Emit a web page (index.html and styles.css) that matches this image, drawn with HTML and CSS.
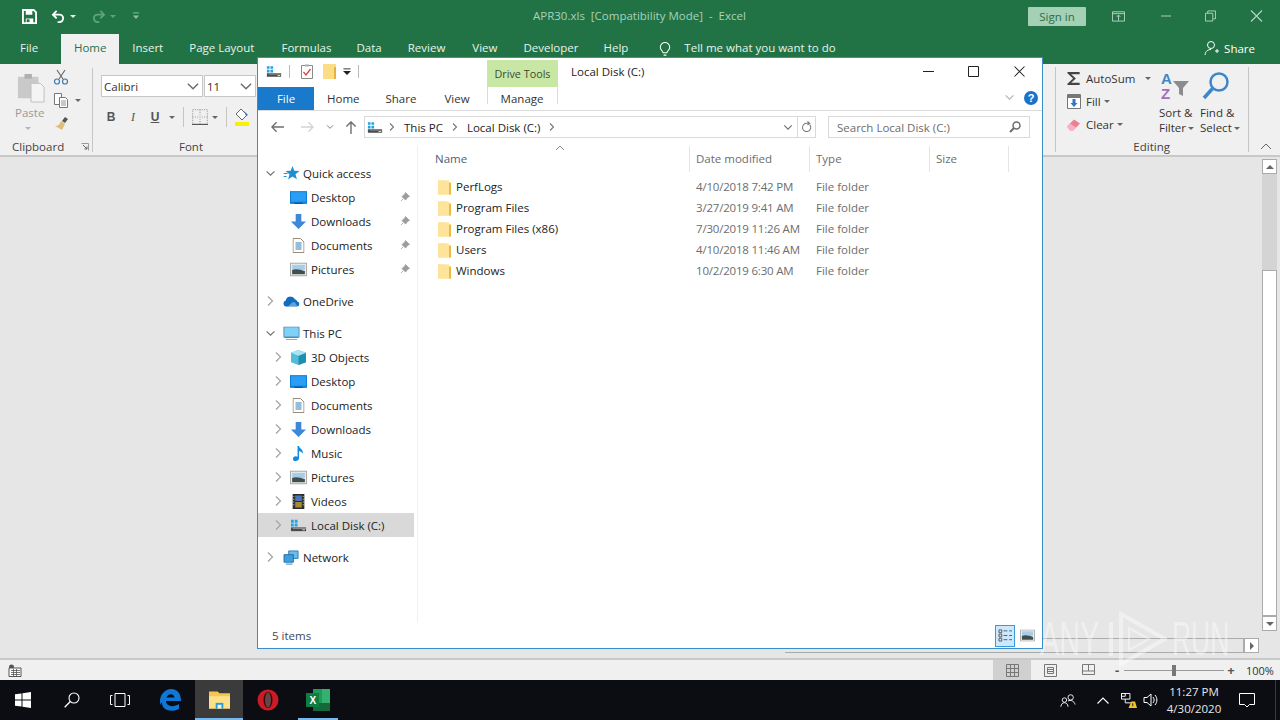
FILE: index.html
```html
<!DOCTYPE html>
<html lang="en">
<head>
<meta charset="utf-8">
<title>APR30.xls - Excel</title>
<link rel="stylesheet" href="styles.css">
</head>
<body>
<svg class="defs" width="0" height="0" aria-hidden="true">
  <defs>
    <symbol id="chev-r" viewBox="0 0 8 12"><path d="M2 1.500 6.500 6 2 10.500" fill="none" stroke="#a6a6a6" stroke-width="1.300"/></symbol>
    <symbol id="chev-d" viewBox="0 0 12 8"><path d="M1.500 1.500 6 6l4.500-4.500" fill="none" stroke="#6e6e6e" stroke-width="1.300"/></symbol>
    <symbol id="folder" viewBox="0 0 15 16"><path d="M1 1.500h8l1.500 1.500H14v12.500H1z" fill="#fbdc84"/><path d="M1 1.500h11v14H1z" fill="#fde49a"/><path d="M12 4h2v11.500h-2z" fill="#e9b949"/></symbol>
    <symbol id="drive" viewBox="0 0 18 14"><path d="M1 1h3v3H1zM5 1h3v3H5zM1 5h3v3H1zM5 5h3v3H5z" fill="#25a3e0"/><path d="M1 9h16v4H1z" fill="#4a4a4a"/><path d="M3 9.500h14v1H3z" fill="#9a9a9a"/><path d="M13 11h3v1h-3z" fill="#dcdcdc"/></symbol>
    <symbol id="desktop" viewBox="0 0 16 14"><path d="M0 1h16v12H0z" fill="#0b7ed6"/><path d="M1 2h14v9H1z" fill="#2a9df4"/><path d="M4 12h8v1H4z" fill="#0a4f88"/></symbol>
    <symbol id="down" viewBox="0 0 16 16"><path d="M5 0h6v8h5l-8 8-8-8h5z" fill="#3d87d6"/></symbol>
    <symbol id="doc" viewBox="0 0 12 15"><path d="M.5.500h7.500l3.500 3.500v10.500H.5z" fill="#fff" stroke="#9a8a7a"/><path d="M3 5h6M3 7h6M3 9h6M3 11h6" stroke="#2a7ab9"/></symbol>
    <symbol id="pics" viewBox="0 0 16 13"><path d="M.5.500h15v12H.5z" fill="#f2f2f2" stroke="#a9a9a9"/><path d="M2 2h12v5H2z" fill="#a8cdea"/><path d="M2 7c4-1.500 8 0 12 1v3H2z" fill="#3f4f4c"/></symbol>
    <symbol id="pin" viewBox="0 0 10 10"><path d="M5.500.500 9.500 4.500 8 5 6 7.500 5.500 8 2 4.500 2.500 4 5 2zM3.500 6.500 1 9" fill="#9c9c9c" stroke="#9c9c9c" stroke-width=".8"/></symbol>
    <symbol id="star" viewBox="0 0 16 15"><path d="M9 0l1.800 4.800 5.200.2-4 3.200 1.400 5L9 10.400 4.600 13.500 6 8.300 2 5.100l5.200-.3z" fill="#1e8fd5"/><path d="M0 7h4v1H0zM0 10h3v1H0z" fill="#1e8fd5"/></symbol>
    <symbol id="cloud" viewBox="0 0 18 11"><path d="M3.500 11A3.300 3.300 0 0 1 3 4.500 5 5 0 0 1 12.500 3 3.200 3.200 0 0 1 15 5.500 2.800 2.800 0 0 1 15 11z" fill="#0f6cc0"/><path d="M5 11l4.500-4.500c1-.8 2.500-.8 3.500.2L15.500 11z" fill="#fff" opacity=".35"/></symbol>
    <symbol id="pc" viewBox="0 0 18 15"><path d="M1 .500h16v11H1z" fill="#7fd1f8" stroke="#4f8fb6"/><path d="M2 11h14v1H2z" fill="#3f7ea6"/><path d="M3 13.500h12v1H3z" fill="#8a8a8a"/></symbol>
    <symbol id="cube" viewBox="0 0 16 16"><path d="M8 0l8 3v10l-8 3-8-3V3z" fill="#52bdd9"/><path d="M8 6l8-3v10l-8 3z" fill="#1f8fae"/><path d="M8 0l8 3-8 3-8-3z" fill="#a8e4f1"/></symbol>
    <symbol id="music" viewBox="0 0 12 16"><path d="M5 0h1.500c.5 3 5 3.500 4 8-1-2-3-2.500-4-2.500V13c0 1.800-1.500 3-3.500 3S0 15 0 13.500 1.500 11 3 11c.8 0 1.500.2 2 .5z" fill="#0f8ce0"/></symbol>
    <symbol id="film" viewBox="0 0 13 16"><path d="M0 0h13v16H0z" fill="#2d2d2d"/><path d="M3 1.500h7v6H3z" fill="#4b76b8"/><path d="M3 8.500h7v6H3z" fill="#a68a36"/><path d="M1 2h1v1H1zM1 5h1v1H1zM1 8h1v1H1zM1 11h1v1H1zM11 2h1v1h-1zM11 5h1v1h-1zM11 8h1v1h-1zM11 11h1v1h-1z" fill="#ddd"/></symbol>
    <symbol id="net" viewBox="0 0 18 16"><path d="M6 1h10v8H6z" fill="#69bde8" stroke="#2f7fb4"/><path d="M1 5h10v8H1z" fill="#3f9fdc" stroke="#1e6ea6"/><path d="M3 14.500h7v1H3z" fill="#2f7fb4"/></symbol>
  </defs>
</svg>

<div class="screen">
  <header class="titlebar">
    <div class="qat">
      <svg class="ic16" viewBox="0 0 16 16"><path d="M1 1h11.500L15 3.500V15H1z" fill="none" stroke="#fff" stroke-width="2"/><path d="M4 1.500h7V6H4zM4 10h8v5H4z" fill="#fff"/><path d="M5 11h3v3H5z" fill="#217346"/></svg>
      <svg class="ic-undo" viewBox="0 0 16 14"><path d="M6 1 2 5l4 4M2 5h7a4 4 0 0 1 0 8H7" fill="none" stroke="#fff" stroke-width="2"/></svg>
      <span class="caret caret-w"></span>
      <svg class="ic-undo dim" viewBox="0 0 16 14"><path d="M10 1l4 4-4 4M14 5H7a4 4 0 0 0 0 8h2" fill="none" stroke="#5fa27f" stroke-width="2"/></svg>
      <span class="caret caret-dim"></span>
      <svg class="ic-more" viewBox="0 0 9 9"><path d="M1 1h7" stroke="#8cc0a4"/><path d="M1 4h7L4.500 8z" fill="#8cc0a4"/></svg>
    </div>
    <div class="doc-title">APR30.xls&nbsp; [Compatibility Mode]&nbsp; -&nbsp; Excel</div>
    <div class="win-ctrls">
      <span class="signin">Sign in</span>
      <svg class="ctl ctl-opts" viewBox="0 0 14 12"><path d="M.5 1.500h13v10H.5zM.5 3.500h13M7 5v6M5 7l2-2 2 2" fill="none" stroke="#b7d5c4"/></svg>
      <svg class="ctl ctl-min" viewBox="0 0 12 12"><path d="M0 6h11" stroke="#b7d5c4"/></svg>
      <svg class="ctl ctl-rest" viewBox="0 0 12 12"><path d="M.5 3h8v8.500h-8zM3 3V.500h8.500V9H9" fill="none" stroke="#b7d5c4"/></svg>
      <svg class="ctl ctl-x" viewBox="0 0 12 12"><path d="M.5.500l11 11M11.500.500l-11 11" stroke="#b7d5c4" stroke-width="1.100"/></svg>
    </div>
  </header>

  <nav class="tabs">
    <span class="tab tab-file">File</span>
    <span class="tab tab-home">Home</span>
    <span class="tab tab-insert">Insert</span>
    <span class="tab tab-layout">Page Layout</span>
    <span class="tab tab-formulas">Formulas</span>
    <span class="tab tab-data">Data</span>
    <span class="tab tab-review">Review</span>
    <span class="tab tab-view">View</span>
    <span class="tab tab-dev">Developer</span>
    <span class="tab tab-help">Help</span>
    <svg class="bulb" viewBox="0 0 12 16"><path d="M4 11.500C3.500 9.500 1 8.500 1 5.500a5 5 0 0 1 10 0c0 3-2.500 4-3 6zM4.500 14h3" fill="none" stroke="#fff" stroke-width="1.100"/></svg>
    <span class="tab tab-tell">Tell me what you want to do</span>
    <span class="share">
      <svg class="share-ic" viewBox="0 0 16 16"><circle cx="7" cy="5" r="3.500" fill="none" stroke="#fff"/><path d="M1 15c.5-4 3-5.500 6-5.500M11 11h4M13 9v4" fill="none" stroke="#fff"/></svg>
      Share
    </span>
  </nav>

  <section class="ribbon">
    <div class="rib-left">
      <div class="group-clip">
        <div class="paste">
          <svg class="paste-ic" viewBox="0 0 30 32"><path d="M1 4h22v23H1z" fill="#c9c9c9"/><path d="M8 1h8v5H8z" fill="#b0b0b0"/><path d="M15 11h10l4 4v16H15z" fill="#f4f4f4" stroke="#bdbdbd"/></svg>
          <span class="paste-label">Paste</span>
          <span class="caret caret-grey paste-caret"></span>
        </div>
        <div class="clip-tools">
          <svg class="tool" viewBox="0 0 16 16"><path d="M4 1l6 9M12 1L6 10" stroke="#6a6a6a" stroke-width="1.200"/><circle cx="4" cy="12.500" r="2.500" fill="none" stroke="#3d7ab0" stroke-width="1.200"/><circle cx="12" cy="12.500" r="2.500" fill="none" stroke="#3d7ab0" stroke-width="1.200"/></svg>
          <span class="tool-row">
            <svg class="tool" viewBox="0 0 16 16"><path d="M1.500 1.500h7v11h-7z" fill="#fff" stroke="#777"/><path d="M6.500 5.500h6l2 2v8h-8z" fill="#fff" stroke="#777"/><path d="M8 9h5M8 11h5M8 13h5" stroke="#777" stroke-width=".8"/></svg>
            <span class="caret caret-grey"></span>
          </span>
          <svg class="tool" viewBox="0 0 16 16"><path d="M9 6l3-4 3 2-3 4z" fill="#555"/><path d="M8 6l4 3-3 6-7-4c3 0 5-2 6-5z" fill="#e0bd7c"/></svg>
        </div>
      </div>
      <div class="group-font">
        <div class="font-row">
          <span class="combo combo-name">Calibri<svg class="combo-arrow" viewBox="0 0 12 8"><use href="#chev-d"/></svg></span>
          <span class="combo combo-size">11<svg class="combo-arrow" viewBox="0 0 12 8"><use href="#chev-d"/></svg></span>
        </div>
        <div class="font-row2">
          <b class="fmt">B</b><i class="fmt fmt-i">I</i><u class="fmt fmt-u">U</u>
          <span class="caret caret-grey"></span>
          <span class="sep"></span>
          <svg class="tool" viewBox="0 0 14 14"><path d="M.5.500h13v13H.5z" fill="none" stroke="#aaa" stroke-dasharray="1 1"/><path d="M7 .5v13M.5 7h13" stroke="#aaa" stroke-dasharray="1 1"/><path d="M0 13.500h14" stroke="#555"/></svg>
          <span class="caret caret-grey"></span>
          <span class="sep"></span>
          <svg class="fill-ic" viewBox="0 0 16 18"><path d="M7 1l6 6-5 5-6-6z" fill="#fff" stroke="#666"/><path d="M10 3l4 4-2 1z" fill="#2f6fc0"/><path d="M1 14h14v4H1z" fill="#f7f000"/></svg>
        </div>
      </div>
    </div>
    <div class="rib-labels">
      <span class="lbl-clip">Clipboard</span>
      <svg class="launcher" viewBox="0 0 8 8"><path d="M.5.500h7v7" fill="none" stroke="#999"/><path d="M2 2l4 4M3.500 6H6V3.500" fill="none" stroke="#666"/></svg>
      <span class="lbl-font">Font</span>
    </div>
    <div class="rib-right">
      <div class="edit-list">
        <div class="edit-row"><svg class="edit-ic" viewBox="0 0 16 16"><path d="M1 1h13v2.500H5l5 4.500-5 4.500h9V15H1v-1.500L7 8 1 2.500z" fill="#444"/></svg><span>AutoSum</span><span class="caret caret-grey caret-auto"></span></div>
        <div class="edit-row"><svg class="edit-ic" viewBox="0 0 14 15"><path d="M.5.500h13v14H.5z" fill="#fff" stroke="#777"/><path d="M1 1h12v3H1z" fill="#777"/><path d="M5.500 5h3v4h2L7 13 3.500 9h2z" fill="#2f78c4"/></svg><span>Fill</span><span class="caret caret-grey caret-row"></span></div>
        <div class="edit-row"><svg class="edit-ic" viewBox="0 0 16 14"><path d="M1 9l7-7 6 4-7 7H4z" fill="#ee7f92"/><path d="M1 9l3-3 6 4-3 3H4z" fill="#f7b3bf"/></svg><span>Clear</span><span class="caret caret-grey caret-row"></span></div>
      </div>
      <div class="edit-big edit-sort">
        <svg class="big-ic" viewBox="0 0 32 28"><text x="2" y="12" class="az az-a">A</text><text x="2" y="27" class="az az-z">Z</text><path d="M14 9h16l-6 7v8l-4-2v-6z" fill="#8c8c8c"/></svg>
        <span>Sort &amp;</span>
        <span class="big-line2">Filter<span class="caret caret-grey caret-tight"></span></span>
      </div>
      <div class="edit-big">
        <svg class="big-ic" viewBox="0 0 30 28"><circle cx="18" cy="10" r="8.500" fill="none" stroke="#3f86c8" stroke-width="2.500"/><path d="M12 16L3 26" stroke="#3f86c8" stroke-width="3.500"/></svg>
        <span>Find &amp;</span>
        <span class="big-line2">Select<span class="caret caret-grey caret-tight"></span></span>
      </div>
    </div>
    <div class="rib-foot">
      <span class="lbl-edit">Editing</span>
      <svg class="collapse" viewBox="0 0 12 7"><path d="M1 6l5-5 5 5" fill="none" stroke="#666"/></svg>
    </div>
  </section>

  <main class="sheet">
    <div class="vscroll">
      <span class="sb-btn"><span class="tri-up"></span></span>
      <span class="sb-track"></span>
      <span class="sb-thumb"></span>
      <span class="sb-btn"><span class="tri-down"></span></span>
    </div>
    <div class="hscroll">
      <span class="hs-line"></span>
      <span class="sb-btn"><span class="tri-right"></span></span>
    </div>
  </main>

  <footer class="statusbar">
    <svg class="macro" viewBox="0 0 14 13"><circle cx="3.500" cy="3" r="2.500" fill="#555"/><path d="M1 4h12v8.500H1z" fill="#fff" stroke="#555"/><path d="M3 6.500h9M3 8.500h9M3 10.500h9M5.500 5v7M8.500 5v7" stroke="#555" stroke-width=".8"/></svg>
    <div class="view-btns">
      <span class="vb vb-on"><svg class="vb-ic" viewBox="0 0 13 13"><path d="M.5.500h12v12H.5zM4.500.5v12M8.500.5v12M.5 4.500h12M.5 8.500h12" fill="none" stroke="#777"/></svg></span>
      <span class="vb"><svg class="vb-ic" viewBox="0 0 13 13"><path d="M.5.500h12v12H.5zM3.500 3.500h6v6h-6zM4 5.500h5M4 7.500h5" fill="none" stroke="#777"/></svg></span>
      <span class="vb"><svg class="vb-ic" viewBox="0 0 13 13"><path d="M.5.500h12v10H.5zM6.500.5v6.500M.5 7h12" fill="none" stroke="#777"/></svg></span>
    </div>
    <div class="zoom">
      <span class="z-pm">-</span>
      <span class="z-track"><span class="z-thumb"></span></span>
      <span class="z-pm">+</span>
      <span class="z-val">100%</span>
    </div>
  </footer>

  <div class="taskbar">
    <svg class="tb-start" viewBox="0 0 16 16"><path d="M0 2.300 6.500 1.400V7.500H0zM7.500 1.300 16 0V7.500H7.500zM0 8.500h6.500V14.600L0 13.700zM7.500 8.500H16V16L7.500 14.700z" fill="#fff"/></svg>
    <svg class="tb-search" viewBox="0 0 16 16"><circle cx="10" cy="6" r="5" fill="none" stroke="#fff" stroke-width="1.100"/><path d="M6.300 9.500.7 15.300" stroke="#fff" stroke-width="1.300"/></svg>
    <svg class="tb-tv" viewBox="0 0 20 14"><path d="M5 .5h10v13H5zM2.500 2.500H.5v9h2M17.500 2.500h2v9h-2" fill="none" stroke="#fff"/></svg>
    <svg class="tb-app tb-edge" viewBox="0 0 22 22"><path d="M1 11C2 4 7 0 12 0c6 0 10 4 10 12H7c0 5 7 7 13 3v5c-8 4-18 1-17-7-1 1-1.500 2-2 3zM7.500 8.500h8C15 4 9 4 7.500 8.500z" fill="#0f78d6"/></svg>
    <span class="tb-slot tb-active">
      <svg class="tb-folder" viewBox="0 0 22 20"><path d="M0 1h9l2 2h11v16H0z" fill="#f2c94c"/><path d="M0 6h22v13H0z" fill="#fde08a"/><path d="M7 13h8v6H7z" fill="#2a9de0"/><path d="M9 15h4v4H9z" fill="#fff3c4"/></svg>
    </span>
    <svg class="tb-app tb-opera" viewBox="0 0 22 22"><circle cx="11" cy="11" r="10.500" fill="#cc1b24"/><ellipse cx="11" cy="11" rx="4.500" ry="8" fill="#3a0b0d"/><ellipse cx="11" cy="11" rx="3" ry="7.500" fill="#eee" opacity=".25"/></svg>
    <span class="tb-slot tb-open">
      <svg class="tb-excel" viewBox="0 0 24 22"><path d="M7 0h17v22H7z" fill="#1f9b58"/><path d="M16 0h8v22h-8z" fill="#34b16f"/><path d="M7 14h17v8H7z" fill="#14693a"/><path d="M0 4h13v14H0z" fill="#107c41"/><text x="3.500" y="15" class="xl-x">X</text></svg>
    </span>
    <div class="tray">
      <svg class="tr-people" viewBox="0 0 18 16"><circle cx="12" cy="4.500" r="3" fill="none" stroke="#fff"/><circle cx="5" cy="7.500" r="2.500" fill="none" stroke="#fff"/><path d="M1 15c0-3 2-4.500 4-4.500s4 1.500 4 4.500M9 8.500c3-1.500 7 0 8 4" fill="none" stroke="#fff"/></svg>
      <svg class="tr-chev" viewBox="0 0 12 7"><path d="M.5 6.500 6 1l5.500 5.500" fill="none" stroke="#fff" stroke-width="1.100"/></svg>
      <svg class="tr-net" viewBox="0 0 17 16"><path d="M.5.500h9v6h-9zM4.500 6.500v4h8" fill="none" stroke="#fff"/><path d="M.5.500h4v3h-4z" fill="none" stroke="#fff"/><path d="M11 9h4l2 7H8z" fill="#f7c325"/><path d="M12 11h1v3h-1z" fill="#222"/></svg>
      <svg class="tr-vol" viewBox="0 0 16 16"><path d="M1 5.500h3L8 2v12L4 10.500H1z" fill="none" stroke="#fff"/><path d="M10 5c1.500 2 1.500 4 0 6M12 3c2.500 3 2.500 7 0 10" fill="none" stroke="#fff"/></svg>
      <div class="clock"><span>11:27 PM</span><span>4/30/2020</span></div>
      <svg class="tr-note" viewBox="0 0 16 15"><path d="M.5.500h15v11h-5L8 14l-2.500-2.500h-5z" fill="none" stroke="#fff"/></svg>
      <span class="tray-edge"></span>
    </div>
  </div>

  <div class="watermark">
    <span class="wm-any">ANY</span>
    <svg class="wm-play" viewBox="0 0 60 58"><path d="M14 4v50l44-25zM4 12v34" fill="none" stroke="#fff" stroke-width="4"/><path d="M22 18v22l20-11z" fill="none" stroke="#fff" stroke-width="2"/></svg>
    <span class="wm-run">RUN</span>
  </div>

  <div class="explorer">
    <div class="ex-top">
      <div class="ex-qat">
        <svg class="ex-drive" viewBox="0 0 18 14"><use href="#drive"/></svg>
        <span class="qsep"></span>
        <svg class="ex-check" viewBox="0 0 12 15"><path d="M.5 1.500h11v13H.5z" fill="#fff" stroke="#8a8a8a"/><path d="M4 .5h4v2H4z" fill="#aaa"/><path d="M2.500 8l2.500 3 4.500-6" fill="none" stroke="#d9463a" stroke-width="1.300"/></svg>
        <svg class="ex-qf" viewBox="0 0 13 15"><path d="M0 0h13v15H0z" fill="#fcdd85"/><path d="M11 3h2v12h-2z" fill="#e6b23c"/></svg>
        <svg class="ex-more" viewBox="0 0 9 8"><path d="M.5.500h8" stroke="#222"/><path d="M0 3h9L4.500 7.500z" fill="#222"/></svg>
        <span class="qsep"></span>
      </div>
      <div class="drive-tools">Drive Tools</div>
      <div class="ex-title">Local Disk (C:)</div>
      <div class="ex-ctrls">
        <svg class="ex-ctl" viewBox="0 0 11 11"><path d="M0 5.500h11" stroke="#222"/></svg>
        <svg class="ex-ctl" viewBox="0 0 11 11"><path d="M.5.500h10v10H.5z" fill="none" stroke="#222"/></svg>
        <svg class="ex-ctl" viewBox="0 0 11 11"><path d="M.5.500l10 10M10.500.500l-10 10" stroke="#222" stroke-width="1.050"/></svg>
      </div>
    </div>
    <div class="ex-tabs">
      <span class="ex-tab ex-file">File</span>
      <span class="ex-tab ex-home">Home</span>
      <span class="ex-tab ex-share">Share</span>
      <span class="ex-tab ex-view">View</span>
      <span class="ex-tab ex-manage">Manage</span>
      <svg class="ex-coll" viewBox="0 0 12 8"><use href="#chev-d"/></svg>
      <svg class="ex-help" viewBox="0 0 14 14"><circle cx="7" cy="7" r="7" fill="#1a73c9"/><text x="7" y="11" class="help-q">?</text></svg>
    </div>
    <div class="ex-nav">
      <svg class="nav-ic" viewBox="0 0 14 12"><path d="M6 1 1 6l5 5M1 6h13" fill="none" stroke="#6f6f6f" stroke-width="1.500"/></svg>
      <svg class="nav-ic nav-fwd" viewBox="0 0 14 12"><path d="M8 1l5 5-5 5M13 6H0" fill="none" stroke="#d4d4d4" stroke-width="1.500"/></svg>
      <svg class="nav-dd" viewBox="0 0 12 8"><use href="#chev-d"/></svg>
      <svg class="nav-ic nav-up" viewBox="0 0 12 14"><path d="M1 6l5-5 5 5M6 1v13" fill="none" stroke="#6f6f6f" stroke-width="1.500"/></svg>
      <div class="addr">
        <svg class="addr-drive" viewBox="0 0 18 14"><use href="#drive"/></svg>
        <svg class="crumb" viewBox="0 0 8 12"><path d="M2 2.500 5.500 6 2 9.500" fill="none" stroke="#777" stroke-width="1.100"/></svg>
        <span>This PC</span>
        <svg class="crumb" viewBox="0 0 8 12"><path d="M2 2.500 5.500 6 2 9.500" fill="none" stroke="#777" stroke-width="1.100"/></svg>
        <span>Local Disk (C:)</span>
        <svg class="crumb" viewBox="0 0 8 12"><path d="M2 2.500 5.500 6 2 9.500" fill="none" stroke="#777" stroke-width="1.100"/></svg>
        <svg class="addr-dd" viewBox="0 0 12 8"><use href="#chev-d"/></svg>
        <span class="addr-refresh"><svg class="refresh" viewBox="0 0 12 13"><path d="M9.500 4a4.500 4.500 0 1 1-3.500-1.500H9M7 .5l2.500 2-2.500 2" fill="none" stroke="#777" stroke-width="1.100"/></svg></span>
      </div>
      <div class="search">
        <span>Search Local Disk (C:)</span>
        <svg class="search-ic" viewBox="0 0 12 12"><circle cx="7.500" cy="4.500" r="3.500" fill="none" stroke="#6d6d6d" stroke-width="1.500"/><path d="M5 7 1 11" stroke="#6d6d6d" stroke-width="2"/></svg>
      </div>
    </div>
    <div class="ex-body">
      <aside class="tree">
        <div class="tree-group">
          <div class="row l0"><svg class="exp" viewBox="0 0 12 8"><use href="#chev-d"/></svg><svg class="ti" viewBox="0 0 16 15"><use href="#star"/></svg><span>Quick access</span></div>
          <div class="row l1"><svg class="ti" viewBox="0 0 16 14"><use href="#desktop"/></svg><span>Desktop</span><svg class="pin" viewBox="0 0 10 10"><use href="#pin"/></svg></div>
          <div class="row l1"><svg class="ti" viewBox="0 0 16 16"><use href="#down"/></svg><span>Downloads</span><svg class="pin" viewBox="0 0 10 10"><use href="#pin"/></svg></div>
          <div class="row l1"><svg class="ti ti-n" viewBox="0 0 12 15"><use href="#doc"/></svg><span>Documents</span><svg class="pin" viewBox="0 0 10 10"><use href="#pin"/></svg></div>
          <div class="row l1"><svg class="ti" viewBox="0 0 16 13"><use href="#pics"/></svg><span>Pictures</span><svg class="pin" viewBox="0 0 10 10"><use href="#pin"/></svg></div>
        </div>
        <div class="tree-group">
          <div class="row l0"><svg class="exp exp-r" viewBox="0 0 8 12"><use href="#chev-r"/></svg><svg class="ti" viewBox="0 0 18 11"><use href="#cloud"/></svg><span>OneDrive</span></div>
        </div>
        <div class="tree-group">
          <div class="row l0"><svg class="exp" viewBox="0 0 12 8"><use href="#chev-d"/></svg><svg class="ti" viewBox="0 0 18 15"><use href="#pc"/></svg><span>This PC</span></div>
          <div class="row l1 sub"><svg class="exp exp-r" viewBox="0 0 8 12"><use href="#chev-r"/></svg><svg class="ti" viewBox="0 0 16 16"><use href="#cube"/></svg><span>3D Objects</span></div>
          <div class="row l1 sub"><svg class="exp exp-r" viewBox="0 0 8 12"><use href="#chev-r"/></svg><svg class="ti" viewBox="0 0 16 14"><use href="#desktop"/></svg><span>Desktop</span></div>
          <div class="row l1 sub"><svg class="exp exp-r" viewBox="0 0 8 12"><use href="#chev-r"/></svg><svg class="ti ti-n" viewBox="0 0 12 15"><use href="#doc"/></svg><span>Documents</span></div>
          <div class="row l1 sub"><svg class="exp exp-r" viewBox="0 0 8 12"><use href="#chev-r"/></svg><svg class="ti" viewBox="0 0 16 16"><use href="#down"/></svg><span>Downloads</span></div>
          <div class="row l1 sub"><svg class="exp exp-r" viewBox="0 0 8 12"><use href="#chev-r"/></svg><svg class="ti ti-n" viewBox="0 0 12 16"><use href="#music"/></svg><span>Music</span></div>
          <div class="row l1 sub"><svg class="exp exp-r" viewBox="0 0 8 12"><use href="#chev-r"/></svg><svg class="ti" viewBox="0 0 16 13"><use href="#pics"/></svg><span>Pictures</span></div>
          <div class="row l1 sub"><svg class="exp exp-r" viewBox="0 0 8 12"><use href="#chev-r"/></svg><svg class="ti ti-n" viewBox="0 0 13 16"><use href="#film"/></svg><span>Videos</span></div>
          <div class="row l1 sub row-sel"><svg class="exp exp-r" viewBox="0 0 8 12"><use href="#chev-r"/></svg><svg class="ti" viewBox="0 0 18 14"><use href="#drive"/></svg><span>Local Disk (C:)</span></div>
        </div>
        <div class="tree-group">
          <div class="row l0"><svg class="exp exp-r" viewBox="0 0 8 12"><use href="#chev-r"/></svg><svg class="ti" viewBox="0 0 18 16"><use href="#net"/></svg><span>Network</span></div>
        </div>
      </aside>
      <section class="files">
        <div class="sort-caret"><svg class="sort-ic" viewBox="0 0 10 6"><path d="M1 5l4-4 4 4" fill="none" stroke="#888"/></svg></div>
        <div class="f-head">
          <span class="c-name">Name</span>
          <span class="c-date">Date modified</span>
          <span class="c-type">Type</span>
          <span class="c-size">Size</span>
        </div>
        <div class="f-row"><span class="c-name"><svg class="f-ic" viewBox="0 0 15 16"><use href="#folder"/></svg><span>PerfLogs</span></span><span class="c-date">4/10/2018 7:42 PM</span><span class="c-type">File folder</span></div>
        <div class="f-row"><span class="c-name"><svg class="f-ic" viewBox="0 0 15 16"><use href="#folder"/></svg><span>Program Files</span></span><span class="c-date">3/27/2019 9:41 AM</span><span class="c-type">File folder</span></div>
        <div class="f-row"><span class="c-name"><svg class="f-ic" viewBox="0 0 15 16"><use href="#folder"/></svg><span>Program Files (x86)</span></span><span class="c-date">7/30/2019 11:26 AM</span><span class="c-type">File folder</span></div>
        <div class="f-row"><span class="c-name"><svg class="f-ic" viewBox="0 0 15 16"><use href="#folder"/></svg><span>Users</span></span><span class="c-date">4/10/2018 11:46 AM</span><span class="c-type">File folder</span></div>
        <div class="f-row"><span class="c-name"><svg class="f-ic" viewBox="0 0 15 16"><use href="#folder"/></svg><span>Windows</span></span><span class="c-date">10/2/2019 6:30 AM</span><span class="c-type">File folder</span></div>
      </section>
    </div>
    <div class="ex-status">
      <span class="ex-count">5 items</span>
      <span class="ex-views">
        <span class="xv xv-on"><svg class="xv-ic" viewBox="0 0 16 14"><path d="M1 1h3v3H1zM1 5.500h3v3H1zM1 10h3v3H1z" fill="none" stroke="#555"/><path d="M6 2h4M12 2h3M6 7h4M12 7h3M6 11.500h4M12 11.500h3" stroke="#555"/></svg></span>
        <span class="xv"><svg class="xv-ic" viewBox="0 0 16 13"><use href="#pics"/></svg></span>
      </span>
    </div>
  </div>
</div>
</body>
</html>
```

FILE: styles.css
```css
* { box-sizing: border-box; }
html, body { margin: 0; padding: 0; overflow: hidden; }
body { font-family: "Open Sans", "Noto Sans", "Liberation Sans", sans-serif; font-size: 11.5px; color: #222; }
.defs { position: absolute; }
svg { display: block; flex: none; }

.screen { position: relative; width: 1280px; height: 720px; display: flex; flex-direction: column; background: #e6e6e6; overflow: hidden; }

/* title bar */
.titlebar { height: 34px; flex: none; background: #217346; display: flex; align-items: center; padding: 0 0 2px 22px; position: relative; color: #fff; }
.qat { display: flex; align-items: center; width: 490px; }
.ic16 { width: 15px; height: 15px; }
.ic-undo { width: 15px; height: 13px; margin-left: 14px; }
.ic-undo.dim { margin-left: 15px; }
.caret { display: inline-block; width: 0; height: 0; border-left: 3px solid transparent; border-right: 3px solid transparent; border-top: 3px solid #fff; margin-left: 4px; vertical-align: middle; flex: none; }
.caret-w { border-top-color: #e8f2ec; }
.caret-dim { border-top-color: #5fa27f; }
.caret-grey { border-top-color: #666; }
.caret-tight { margin-left: 2px; }
.caret-row { margin-left: -1px; }
.ic-more { width: 8px; height: 8px; margin-left: 16px; }
.doc-title { position: absolute; left: 533px; top: 8px; color: #a9d1bb; font-size: 11.5px; white-space: nowrap; }
.win-ctrls { margin-left: auto; display: flex; align-items: center; }
.signin { width: 58px; height: 19px; background: #a4d0b6; color: #2a6f49; text-align: center; line-height: 19px; border-radius: 1px; font-size: 11.500px; margin-right: 26px; }
.ctl { width: 13px; height: 12px; }
.ctl-opts { margin-right: 36px; }
.ctl-min { width: 11px; margin-right: 33px; }
.ctl-rest { width: 11px; margin-right: 34px; }
.ctl-x { margin-right: 17px; }

/* excel tabs */
.tabs { height: 30px; flex: none; background: #217346; display: flex; align-items: flex-end; color: #e8f2ec; position: relative; padding-left: 20px; }
.tab { height: 30px; line-height: 28px; white-space: nowrap; }
.tab-home { background: #f0f0f0; color: #26724a; width: 58px; text-align: center; margin-left: 23px; }
.tab-insert { margin-left: 13px; }
.tab-layout { margin-left: 26px; }
.tab-formulas { margin-left: 27px; }
.tab-data { margin-left: 25px; }
.tab-review { margin-left: 26px; }
.tab-view { margin-left: 27px; }
.tab-dev { margin-left: 26px; }
.tab-help { margin-left: 25px; }
.bulb { width: 12px; height: 15px; margin: 0 13px 7px 31px; }
.share { margin-left: auto; margin-right: 25px; display: flex; align-items: center; gap: 4px; height: 30px; padding-bottom: 2px; color: #fff; }
.share-ic { width: 16px; height: 16px; }

/* ribbon */
.ribbon { height: 93px; flex: none; background: #f0f0f0; border-bottom: 2px solid #c8c8c8; display: grid; grid-template-columns: 257px 1fr auto; grid-template-rows: 68px 23px; position: relative; }
.rib-left { grid-column: 1; grid-row: 1; display: flex; }
.group-clip { width: 93px; height: 84px; display: flex; border-right: 1px solid #c6c6c6; padding: 8px 0 0 17px; margin-top: 4px; }
.paste { width: 36px; display: flex; flex-direction: column; align-items: flex-start; }
.paste-ic { width: 28px; height: 32px; margin-top: -4px; }
.paste-label { color: #9a9a9a; margin: 1px 0 0 -2px; }
.paste-caret { margin: 7px 0 0 8px; border-top-color: #b5b5b5; }
.clip-tools { display: flex; flex-direction: column; gap: 7px; margin-left: 0; margin-top: -7px; }
.tool { width: 16px; height: 16px; }
.tool-row { display: flex; align-items: center; gap: 2px; }
.group-font { padding: 11px 0 0 8px; }
.font-row { display: flex; gap: 1px; }
.combo { height: 22px; background: #fff; border: 1px solid #c6c6c6; display: flex; align-items: center; padding-left: 2px; justify-content: space-between; padding-right: 2px; font-size: 11.500px; color: #333; }
.combo-name { width: 102px; }
.combo-size { width: 52px; }
.combo-arrow { width: 14px; height: 9px; }
.font-row2 { display: flex; align-items: center; margin: 10px 0 0 -1px; height: 20px; }
.fmt { font-family: "Liberation Sans", sans-serif; font-size: 12px; width: 22px; color: #555; text-align: center; }
.fmt-i { font-family: "Liberation Serif", serif; }
.fmt-u { text-decoration: underline; font-weight: bold; }
.fmt + .caret { margin-left: 3px; }
.sep { width: 1px; height: 20px; background: #c6c6c6; margin: 0 8px; }
.fill-ic { width: 16px; height: 18px; margin-left: -1px; }
.rib-labels { grid-column: 1; grid-row: 2; display: flex; align-items: center; position: relative; padding: 6px 0 0 12px; color: #444; }
.lbl-clip { width: 69px; }
.launcher { width: 8px; height: 8px; }
.lbl-font { margin-left: 90px; }
.rib-right { grid-column: 3; grid-row: 1; display: flex; width: 194px; margin-right: 31px; border-left: 1px solid #c6c6c6; border-right: 1px solid #c6c6c6; height: 85px; margin-top: 3px; margin-bottom: -20px; }
.edit-list { width: 103px; display: flex; flex-direction: column; padding-left: 10px; }
.edit-row { height: 23px; display: flex; align-items: center; gap: 4px; color: #333; white-space: nowrap; }
.edit-ic { width: 16px; height: 15px; }
.caret-auto { margin-left: 6px; }
.edit-big { display: flex; flex-direction: column; align-items: flex-start; width: 41px; line-height: 15px; color: #333; white-space: nowrap; }
.big-ic { width: 32px; height: 28px; margin: 5px 0 5px; overflow: visible; }
.az { font-family: "Liberation Sans", sans-serif; font-size: 15px; font-weight: bold; }
.az-a { fill: #3f86c8; }
.az-z { fill: #a46fb5; }
.rib-foot { grid-column: 2 / 4; grid-row: 2; display: flex; justify-content: flex-end; align-items: center; color: #444; padding: 6px 8px 0 0; }
.lbl-edit { margin-right: 90px; }
.collapse { width: 12px; height: 7px; }

/* sheet */
.sheet { flex: 1; background: #e6e6e6; position: relative; display: flex; justify-content: flex-end; }
.vscroll { width: 14px; margin: 2px 4px 0 0; display: flex; flex-direction: column; height: 472px; }
.sb-btn { width: 15px; height: 15px; background: #fff; border: 1px solid #ababab; display: flex; align-items: center; justify-content: center; flex: none; }
.sb-track { height: 96px; width: 15px; background: #d4d4d4; flex: none; }
.sb-thumb { flex: 1; width: 15px; background: #fff; border: 1px solid #ababab; }
.tri-up { width: 0; height: 0; border: 4px solid transparent; border-top: 0; border-bottom: 4px solid #666; }
.tri-down { width: 0; height: 0; border: 4px solid transparent; border-bottom: 0; border-top: 4px solid #666; }
.tri-right { width: 0; height: 0; border: 4px solid transparent; border-right: 0; border-left: 4px solid #666; }
.hscroll { position: absolute; left: 785px; right: 21px; bottom: 5px; height: 15px; display: flex; align-items: center; }
.hs-line { flex: 1; height: 15px; background: #e6e6e6; border: 1px solid #ababab; border-left: 0; }

/* status bar */
.statusbar { height: 22px; flex: none; background: #f0f0f0; border-top: 2px solid #c8c8c8; display: flex; align-items: center; padding-left: 8px; color: #444; }
.macro { width: 14px; height: 13px; }
.view-btns { display: flex; margin-left: 971px; height: 20px; }
.vb { width: 38px; display: flex; align-items: center; justify-content: center; }
.vb-on { background: #d0d0d0; }
.vb-ic { width: 13px; height: 13px; }
.zoom { display: flex; align-items: center; margin-left: 6px; }
.z-pm { width: 8px; font-weight: 700; font-size: 13px; color: #555; line-height: 1; text-align: center; }
.z-track { width: 100px; height: 1px; background: #999; position: relative; margin: 0 3px; display: block; }
.z-thumb { position: absolute; left: 48px; top: -5px; width: 4px; height: 11px; background: #777; }
.z-val { margin-left: 11px; color: #333; white-space: nowrap; font-size: 11px; }

/* taskbar */
.taskbar { height: 40px; flex: none; background: #0b0d13; display: flex; align-items: center; color: #fff; padding-left: 15px; }
.tb-start { width: 16px; height: 16px; }
.tb-search { width: 16px; height: 16px; margin-left: 33px; }
.tb-tv { width: 20px; height: 14px; margin-left: 30px; }
.tb-app { width: 22px; height: 22px; }
.tb-edge { margin-left: 29px; }
.tb-slot { height: 40px; display: flex; align-items: center; justify-content: center; border-bottom: 2px solid #76b9ed; padding-top: 2px; }
.tb-active { width: 48px; background: #3b3b3b; margin-left: 14px; }
.tb-folder { width: 21px; height: 20px; }
.tb-opera { margin-left: 14px; }
.tb-open { width: 40px; margin-left: 19px; }
.tb-excel { width: 24px; height: 22px; }
.xl-x { font-family: "Liberation Sans", sans-serif; font-weight: bold; font-size: 10px; fill: #fff; }
.tray { margin-left: auto; display: flex; align-items: center; height: 40px; padding-right: 4px; }
.tr-people { width: 16px; height: 15px; margin-right: 21px; }
.tr-chev { width: 12px; height: 7px; margin-right: 12px; }
.tr-net { width: 16px; height: 15px; margin-right: 6px; }
.tr-vol { width: 16px; height: 16px; margin-right: 7px; }
.clock { display: flex; flex-direction: column; align-items: center; width: 56px; font-size: 11.500px; line-height: 17px; color: #e8e8e8; }
.tr-note { width: 16px; height: 15px; margin-left: 17px; margin-right: 20px; }
.tray-edge { width: 1px; height: 40px; background: #3a3a3a; }

/* watermark */
.watermark { position: absolute; left: 1040px; top: 608px; width: 195px; height: 62px; display: flex; align-items: center; font-family: "Liberation Sans", sans-serif; font-size: 48px; line-height: 36px; color: rgba(255,255,255,.42); white-space: nowrap; pointer-events: none; }
.wm-any, .wm-run { display: block; width: 60px; transform-origin: left center; transform: scaleX(.6); }
.wm-run { transform: scaleX(.55); }
.wm-play { width: 60px; height: 58px; margin: 0 5px 0 7px; opacity: .42; }

/* explorer window */
.explorer { position: absolute; left: 257px; top: 57px; width: 786px; height: 592px; background: #fff; border: 1px solid #3a8dc9; display: flex; flex-direction: column; }
.ex-top { height: 29px; flex: none; display: flex; position: relative; }
.ex-qat { display: flex; align-items: center; padding-left: 8px; width: 229px; height: 27px; }
.ex-drive { width: 16px; height: 13px; }
.qsep { width: 1px; height: 13px; background: #b8b8b8; margin-left: 7px; }
.ex-check { width: 12px; height: 15px; margin-left: 11px; }
.ex-qf { width: 13px; height: 15px; margin-left: 10px; }
.ex-more { width: 8px; height: 8px; margin-left: 7px; }
.drive-tools { width: 71px; height: 27px; margin-top: 2px; background: #c8e7a4; text-align: center; line-height: 27px; font-size: 10.800px; color: #3a4a32; }
.ex-title { margin-left: 13px; line-height: 27px; color: #222; font-size: 11.500px; }
.ex-ctrls { margin-left: auto; display: flex; align-items: center; height: 27px; }
.ex-ctl { width: 11px; height: 11px; margin-right: 34px; }
.ex-ctl:nth-child(2) { margin-right: 35px; }
.ex-ctl:last-child { margin-right: 17px; }
.ex-tabs { height: 24px; flex: none; display: flex; align-items: center; border-bottom: 1px solid #dadbdc; }
.ex-tab { height: 23px; line-height: 24px; color: #333; white-space: nowrap; }
.ex-file { width: 56px; background: #1979ca; color: #fff; text-align: center; }
.ex-home { margin-left: 13px; }
.ex-share { margin-left: 26px; }
.ex-view { margin-left: 28px; }
.ex-manage { width: 71px; margin-left: 17px; text-align: center; border-left: 1px solid #dadbdc; border-right: 1px solid #dadbdc; height: 17px; align-self: flex-start; line-height: 24px; overflow: visible; }
.ex-coll { width: 11px; height: 7px; margin-left: 446px; margin-top: -2px; opacity: .5; }
.ex-help { width: 14px; height: 14px; margin: -2px 0 0 9px; }
.help-q { font-family: "Liberation Sans", sans-serif; font-size: 11px; font-weight: bold; fill: #fff; text-anchor: middle; }

.ex-nav { height: 34px; flex: none; display: flex; align-items: center; padding: 0 0 2px 13px; }
.nav-ic { width: 13px; height: 12px; }
.nav-fwd { margin-left: 17px; }
.nav-dd { width: 8px; height: 6px; margin-left: 12px; }
.nav-up { width: 12px; height: 13px; margin-left: 11px; }
.addr { width: 452px; height: 22px; margin-left: 7px; border: 1px solid #d9d9d9; display: flex; align-items: center; padding-left: 2px; color: #222; }
.addr-drive { width: 16px; height: 13px; }
.crumb { width: 8px; height: 12px; margin: 0 8px 0 7px; }
.addr-drive + .crumb { margin-left: 5px; margin-right: 8px; }
.addr span + .crumb { margin-left: 8px; }
.addr-dd { width: 10px; height: 7px; margin-left: auto; margin-right: 4px; }
.addr-refresh { width: 18px; height: 20px; border-left: 1px solid #d9d9d9; display: flex; align-items: center; justify-content: center; }
.refresh { width: 11px; height: 12px; }
.search { width: 202px; height: 22px; margin-left: 12px; border: 1px solid #d9d9d9; display: flex; align-items: center; justify-content: space-between; padding: 0 8px; color: #6d6d6d; }
.search-ic { width: 12px; height: 12px; }

.ex-body { flex: 1; min-height: 0; display: flex; }
.tree { width: 160px; flex: none; padding-top: 16px; border-right: 1px solid #f0f0f0; }
.tree-group { margin-bottom: 8px; }
.row { height: 24px; display: flex; align-items: center; color: #222; position: relative; white-space: nowrap; }
.row.l0 { padding-left: 25px; }
.row.l1 { padding-left: 32px; }
.exp { position: absolute; left: 7px; top: 8.500px; width: 11px; height: 7px; }
.exp-r { left: 8px; top: 6px; width: 8px; height: 12px; }
.sub .exp-r { left: 16px; }
.ti { width: 17px; height: 15px; margin-right: 3px; }
.ti-n { width: 13px; padding: 0; margin-left: 2px; margin-right: 6px; }
.l1 .ti { margin-right: 4px; }
.l1 .ti-n { margin-right: 6px; }
.pin { position: absolute; left: 142px; top: 7px; width: 10px; height: 10px; }
.row-sel { background: #d9d9d9; width: 156px; }

.files { flex: 1; position: relative; }
.sort-caret { position: absolute; left: 137px; top: 0; }
.sort-ic { width: 10px; height: 6px; }
.f-head { height: 28px; display: flex; align-items: center; margin-bottom: 3px; color: #4c607a; }
.c-name { width: 272px; padding-left: 17px; display: flex; align-items: center; white-space: nowrap; color: #222; flex: none; }
.f-head .c-name { width: 271px; color: #4c607a; }
.c-date { width: 120px; padding-left: 6px; color: #6d6d6d; flex: none; white-space: nowrap; }
.f-row .c-date { letter-spacing: -.2px; }
.c-type { width: 120px; padding-left: 6px; color: #6d6d6d; flex: none; white-space: nowrap; }
.c-size { width: 80px; padding-left: 6px; color: #6d6d6d; flex: none; }
.f-head span { height: 26px; line-height: 26px; }
.f-head .c-date, .f-head .c-type, .f-head .c-size { border-left: 1px solid #e5e5e5; }
.f-head .c-size { border-right: 1px solid #e5e5e5; }
.f-row { height: 21px; display: flex; align-items: center; }
.f-ic { width: 15px; height: 16px; margin: 0 4px 0 2px; }

.ex-status { height: 25px; flex: none; display: flex; align-items: center; padding-left: 14px; color: #3a4a5a; }
.ex-views { margin-left: auto; display: flex; margin-right: 6px; gap: 3px; }
.xv { width: 18px; height: 22px; display: flex; align-items: center; justify-content: center; }
.xv-on { width: 20px; background: #cce8ff; border: 1px solid #3a9bdc; }
.xv-ic { width: 15px; height: 13px; }
```
